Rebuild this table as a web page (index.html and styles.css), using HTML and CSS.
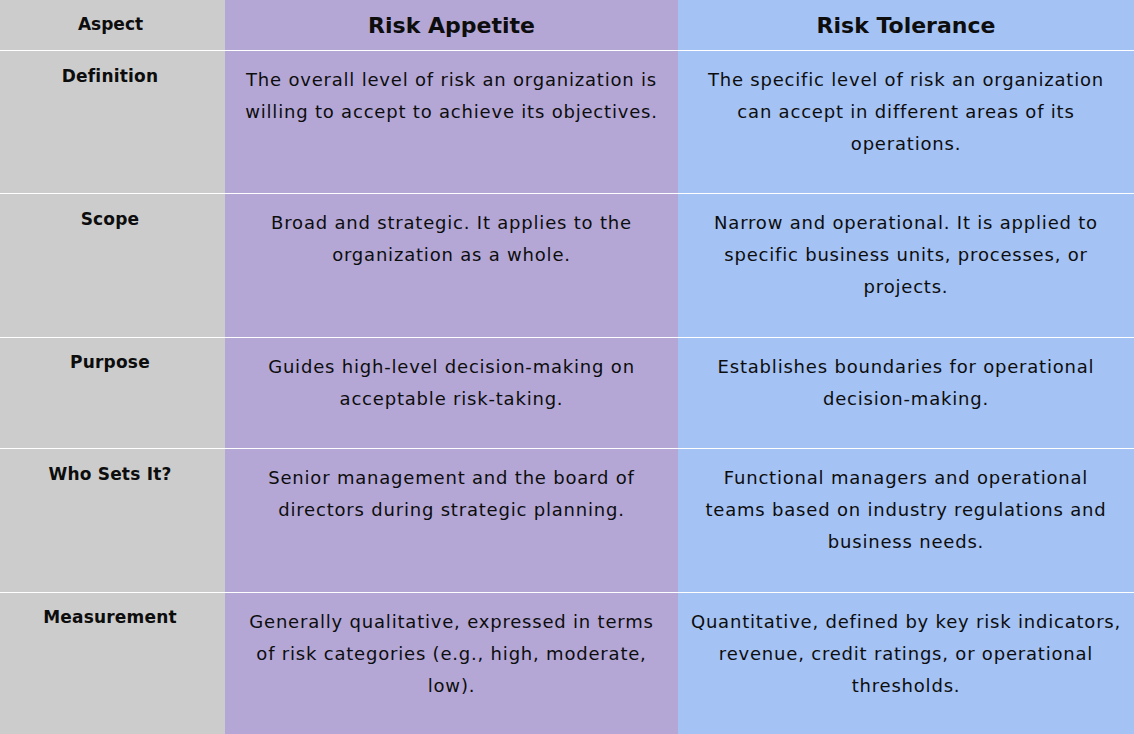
FILE: index.html
```html
<!DOCTYPE html>
<html lang="en">
<head>
<meta charset="utf-8">
<title>Risk Appetite vs Risk Tolerance</title>
<link rel="stylesheet" href="styles.css">
</head>
<body>
<div class="table">
  <div class="cell aspect head"><span class="head-small">Aspect</span></div>
  <div class="cell appetite head"><span class="head-big">Risk Appetite</span></div>
  <div class="cell tolerance head"><span class="head-big">Risk Tolerance</span></div>

  <div class="cell aspect label">Definition</div>
  <div class="cell appetite">The overall level of risk an organization is<br>willing to accept to achieve its objectives.</div>
  <div class="cell tolerance">The specific level of risk an organization<br>can accept in different areas of its<br>operations.</div>

  <div class="cell aspect label">Scope</div>
  <div class="cell appetite">Broad and strategic. It applies to the<br>organization as a whole.</div>
  <div class="cell tolerance">Narrow and operational. It is applied to<br>specific business units, processes, or<br>projects.</div>

  <div class="cell aspect label">Purpose</div>
  <div class="cell appetite">Guides high-level decision-making on<br>acceptable risk-taking.</div>
  <div class="cell tolerance">Establishes boundaries for operational<br>decision-making.</div>

  <div class="cell aspect label">Who Sets It?</div>
  <div class="cell appetite">Senior management and the board of<br>directors during strategic planning.</div>
  <div class="cell tolerance">Functional managers and operational<br>teams based on industry regulations and<br>business needs.</div>

  <div class="cell aspect label last">Measurement</div>
  <div class="cell appetite last">Generally qualitative, expressed in terms<br>of risk categories (e.g., high, moderate,<br>low).</div>
  <div class="cell tolerance last">Quantitative, defined by key risk indicators,<br>revenue, credit ratings, or operational<br>thresholds.</div>
</div>
</body>
</html>
```

FILE: styles.css
```css
html, body {
  margin: 0;
  padding: 0;
}
body {
  font-family: "DejaVu Sans", sans-serif;
  color: #0d0d0d;
  background: #cccccc;
}
.table {
  display: grid;
  grid-template-columns: 225px 453px 1fr;
  width: 1134px;
}
.cell {
  border-bottom: 1px solid #ffffff;
  padding: 13px 8px 33.4px;
  text-align: center;
  font-size: 18px;
  line-height: 32px;
  letter-spacing: 0.8px;
  white-space: nowrap;
}
.cell.last {
  border-bottom: none;
}
.aspect { background: #cccccc; }
.appetite { background: #b4a7d6; }
.tolerance { background: #a4c2f4; }
.head {
  height: 51px;
  box-sizing: border-box;
  padding: 0 8px;
  display: flex;
  align-items: center;
  justify-content: center;
  letter-spacing: 0;
}
.head-small {
  font-weight: 700;
  font-size: 17px;
  line-height: 22px;
  margin-top: -2px;
  margin-right: 4px;
}
.head-big {
  font-weight: 700;
  font-size: 22px;
  line-height: 28px;
  margin-top: 1px;
}
.label {
  font-weight: 700;
  font-size: 17px;
  line-height: 22px;
  letter-spacing: 0.2px;
  padding-top: 13.5px;
  padding-left: 10px;
  padding-right: 15px;
}
```
